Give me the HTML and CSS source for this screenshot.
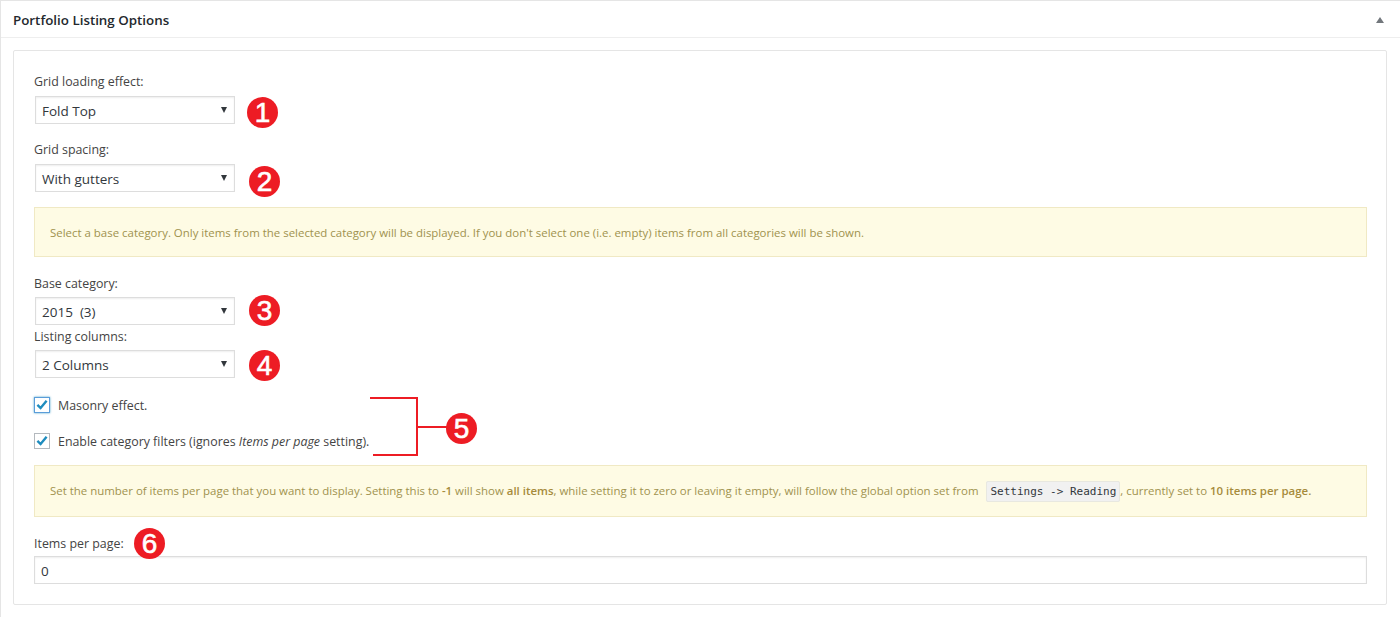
FILE: index.html
```html
<!DOCTYPE html>
<html lang="en">
<head>
<meta charset="utf-8">
<title>Portfolio Listing Options</title>
<link rel="stylesheet" href="styles.css">
</head>
<body>
<section class="postbox">
  <header class="postbox-head">
    <h2>Portfolio Listing Options</h2>
    <span class="toggle"></span>
  </header>
  <div class="panel">
    <div class="field first">
      <div class="label">Grid loading effect:</div>
      <div class="select"><span>Fold Top</span><i class="caret"></i></div>
    </div>
    <div class="field second">
      <div class="label">Grid spacing:</div>
      <div class="select"><span>With gutters</span><i class="caret"></i></div>
    </div>
    <div class="notice one">Select a base category. Only items from the selected category will be displayed. If you don't select one (i.e. empty) items from all categories will be shown.</div>
    <div class="field third">
      <div class="label">Base category:</div>
      <div class="select"><span>2015&nbsp; (3)</span><i class="caret"></i></div>
    </div>
    <div class="field fourth">
      <div class="label">Listing columns:</div>
      <div class="select"><span>2 Columns</span><i class="caret"></i></div>
    </div>
    <label class="check c-one"><span class="box focus"><svg viewBox="0 0 16 16" width="16" height="16"><path d="M3.4 7.8 L6.6 11 L12.6 3.8" fill="none" stroke="#1e8cbe" stroke-width="2.4"/></svg></span>Masonry effect.</label>
    <label class="check c-two"><span class="box"><svg viewBox="0 0 16 16" width="16" height="16"><path d="M3.4 7.8 L6.6 11 L12.6 3.8" fill="none" stroke="#1e8cbe" stroke-width="2.4"/></svg></span><span>Enable category filters (ignores <em>Items per page</em> setting).</span></label>
    <div class="notice two">Set the number of items per page that you want to display. Setting this to <b>-1</b> will show <b>all items</b>, while setting it to zero or leaving it empty, will follow the global option set from <code>Settings -&gt; Reading</code>, currently set to <b>10 items per page.</b></div>
    <div class="field last">
      <div class="label">Items per page:</div>
      <div class="input">0</div>
    </div>
  </div>

  <span class="badge b1">1</span>
  <span class="badge b2">2</span>
  <span class="badge b3">3</span>
  <span class="badge b4">4</span>
  <span class="badge b5">5</span>
  <span class="badge b6">6</span>
  <svg class="bracket" width="50" height="60" viewBox="0 0 50 60"><path d="M0 1 H47 V58 H3 M47 30 H78" fill="none" stroke="#ed1c24" stroke-width="2"/></svg>
</section>
</body>
</html>
```
FILE: styles.css
```css
* { box-sizing: border-box; }
html, body { margin: 0; padding: 0; background: #fff; }
body { width: 1400px; height: 617px; overflow: hidden; font-family: "Open Sans", "Noto Sans", sans-serif; font-size: 12.4px; color: #444; }
.postbox { position: relative; height: 617px; border-top: 1px solid #e5e5e5; border-left: 1px solid #e5e5e5; }
.postbox-head { height: 37px; border-bottom: 1px solid #eee; display: flex; align-items: center; justify-content: space-between; padding: 1px 16px 0 12px; }
.postbox-head h2 { margin: 0; font-size: 13.35px; font-weight: 600; color: #23282d; }
.toggle { width: 0; height: 0; border-left: 4px solid transparent; border-right: 4px solid transparent; border-bottom: 6px solid #72777c; }
.panel { margin: 12px 12px 0; width: 1374px; height: 555px; border: 1px solid #e5e5e5; border-radius: 2px; padding: 20px 19px 0 20px; display: flex; flex-direction: column; }
.label { height: 20px; line-height: 20px; padding-top: 1px; color: #444; }
.select { width: 200px; height: 28px; margin: 5px 0 0 1px; border: 1px solid #ddd; box-shadow: inset 0 1px 2px rgba(0,0,0,.07); display: flex; align-items: center; justify-content: space-between; padding: 2px 6px 0 6px; font-size: 13.5px; color: #32373c; }
.caret { width: 0; height: 0; border-left: 3.5px solid transparent; border-right: 3.5px solid transparent; border-top: 6px solid #32373c; margin: -2px 1px 0 0; }
.field.second { margin-top: 15px; }
.notice { background: #fefbe4; border: 1px solid #f0e9c4; color: #a0924e; display: flex; align-items: center; padding: 0 15px; font-size: 11.44px; }
.notice.one { height: 50px; margin-top: 15px; }
.notice.two { height: 52px; display: block; line-height: 50px; white-space: nowrap; margin-top: 16px; }
.notice b { font-weight: 600; color: #a68b3c; }
code { font-family: "DejaVu Sans Mono", "Liberation Mono", monospace; font-size: 11px; color: #32373c; background: #f1f1f1; border: 1px solid #e8e8e0; border-radius: 2px; padding: 3px; margin: 0 0 0 5px; }
.field.third { margin-top: 16px; }
.field.third .select { margin-top: 4px; }
.field.fourth { margin-top: 1px; }
.field.fourth .select { margin-top: 4px; }
.check { display: flex; align-items: center; height: 16px; gap: 8px; }
.check.c-one { margin-top: 19px; }
.check.c-two { margin-top: 20px; }
.box { width: 16px; height: 16px; border: 1px solid #b4b9be; background: #fff; flex: none; position: relative; display: block; }
.box svg { position: absolute; left: -1px; top: -1px; }
.box.focus { border-color: #5b9dd9; box-shadow: 0 0 2px rgba(30,140,190,.8); }
em { font-style: italic; }
.field.last { margin-top: 16px; }
.input { height: 28px; width: 1333px; margin-top: 3px; border: 1px solid #ddd; box-shadow: inset 0 1px 2px rgba(0,0,0,.07); line-height: 28px; padding-left: 6px; font-size: 13.5px; color: #32373c; }
.badge { position: absolute; width: 31px; height: 31px; border-radius: 50%; background: #ed1c24; color: #fff; font-family: "Liberation Sans", sans-serif; font-weight: 400; -webkit-text-stroke: 0.6px #fff; font-size: 28px; line-height: 31px; text-align: center; }
.b1 { left: 246px; top: 96px; }
.b2 { left: 248px; top: 165px; }
.b3 { left: 248px; top: 294px; }
.b4 { left: 248px; top: 349px; }
.b5 { left: 445px; top: 412px; }
.b6 { left: 133px; top: 527px; }
.bracket { position: absolute; left: 369px; top: 396px; overflow: visible; }
```
